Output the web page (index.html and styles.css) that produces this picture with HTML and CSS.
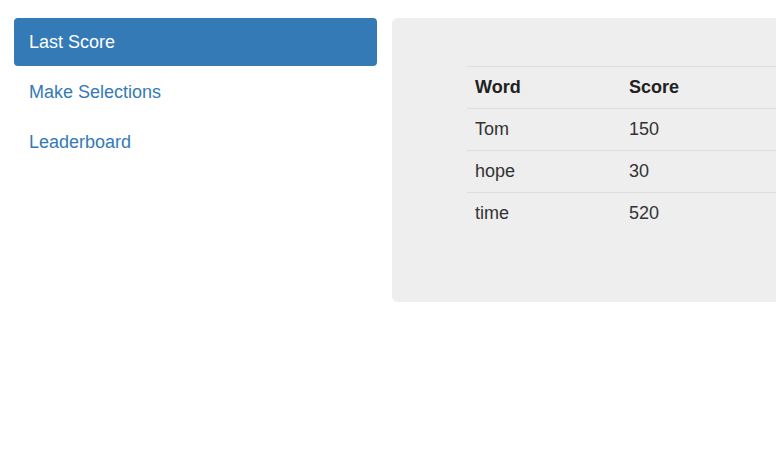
FILE: index.html
```
<!DOCTYPE html>
<html>
<head>
<meta charset="utf-8">
<link rel="stylesheet" href="styles.css">
</head>
<body>
<div class="page">
  <ul class="pills">
    <li class="active"><a href="#">Last Score</a></li>
    <li><a href="#">Make Selections</a></li>
    <li><a href="#">Leaderboard</a></li>
  </ul>
  <div class="panel">
    <table class="scores">
      <thead>
        <tr><th class="c1">Word</th><th>Score</th></tr>
      </thead>
      <tbody>
        <tr><td class="c1">Tom</td><td>150</td></tr>
        <tr><td class="c1">hope</td><td>30</td></tr>
        <tr><td class="c1">time</td><td>520</td></tr>
      </tbody>
    </table>
  </div>
</div>
</body>
</html>
```
FILE: styles.css
```
html, body {
  margin: 0;
  padding: 0;
  background: #fff;
}
body {
  font-family: "Liberation Sans", Arial, sans-serif;
  font-size: 18px;
  line-height: 1.42857;
  color: #333;
}
.page {
  display: flex;
  gap: 15px;
  padding: 18px 0 0 14px;
}
.pills {
  list-style: none;
  margin: 0;
  padding: 0;
  width: 363px;
  flex: none;
  display: flex;
  flex-direction: column;
  gap: 2px;
}
.pills a {
  display: block;
  padding: 10px 15px;
  line-height: 28px;
  color: #337ab7;
  text-decoration: none;
  border-radius: 4px;
}
.pills .active a {
  background: #337ab7;
  color: #fff;
}
.panel {
  flex: 1;
  min-width: 0;
  background: #eee;
  border-radius: 6px 0 0 6px;
  padding: 48px 0 48px 75px;
}
.scores {
  border-collapse: collapse;
  width: 100%;
  margin-bottom: 20px;
}
.scores th, .scores td {
  text-align: left;
  padding: 8px;
  line-height: 25px;
  border-top: 1px solid #ddd;
}
.scores th {
  font-weight: bold;
  color: #222;
}
.scores td {
  color: #333;
}
.scores .c1 {
  width: 138px;
}
```
